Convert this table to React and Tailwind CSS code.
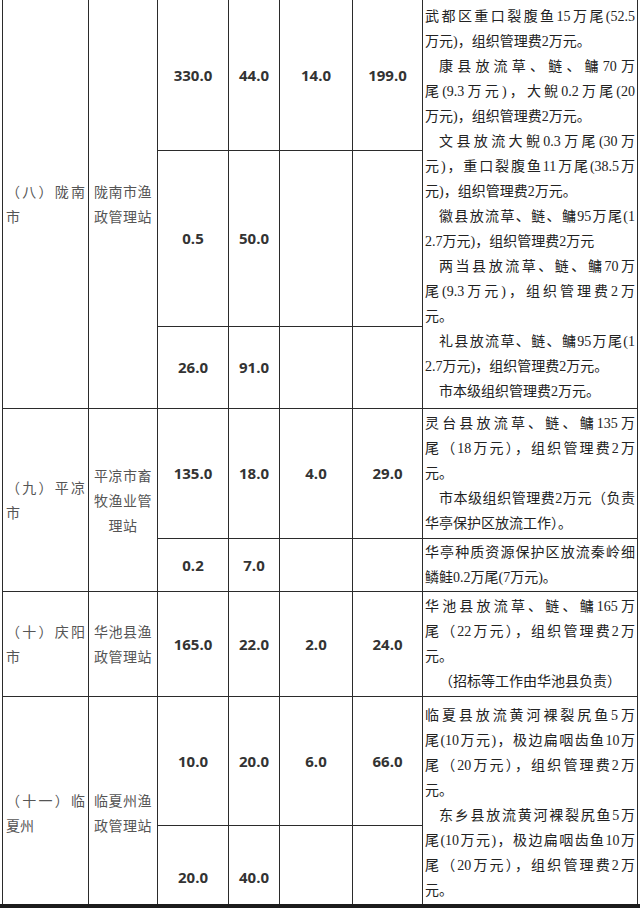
import React from "react"
import clsx from "clsx"

// one visual line of the notes column; j = stretched to full width, i = paragraph indent
const Line = ({ t, j, i }) => (
    <div className={clsx(j ? "text-justify [text-align-last:justify]" : "text-left", i && "indent-[14px]")}>
        {t}
    </div>
)

const Num = ({ pos, v }) => (
    <div className={clsx(pos, "flex items-center justify-center bg-white font-['Open_Sans',sans-serif] text-[15px] font-bold text-[#333]")}>
        {v}
    </div>
)

const Region = ({ pos, text }) => (
    <div className={clsx(pos, "flex items-center bg-white px-[3px] font-['Noto_Sans_CJK_SC',sans-serif] text-[14px] leading-[25px] text-[#555]")}>
        <div className="w-full text-justify">{text}</div>
    </div>
)

const Station = ({ pos, text }) => (
    <div className={clsx(pos, "flex items-center justify-center bg-white px-[4px] text-center font-['Noto_Sans_CJK_SC',sans-serif] text-[14px] leading-[25px] tracking-[0.5px] text-[#555]")}>
        <div>{text}</div>
    </div>
)

const Notes = ({ pos, lines, top }) => (
    <div className={clsx(pos, "flex bg-white px-[2px] font-['Liberation_Serif','Noto_Sans_CJK_SC',serif] text-[14px] leading-[25px] text-[#222]", top ? "items-start pt-[6px]" : "items-center")}>
        <div className="w-full">
            {lines.map((l, k) => <Line key={k} {...l} />)}
        </div>
    </div>
)

const longnan = [
    { t: "武都区重口裂腹鱼15万尾(52.5", j: true },
    { t: "万元)，组织管理费2万元。" },
    { t: "康县放流草、鲢、鳙70万", j: true, i: true },
    { t: "尾(9.3万元)，大鲵0.2万尾(20", j: true },
    { t: "万元)，组织管理费2万元。" },
    { t: "文县放流大鲵0.3万尾(30万", j: true, i: true },
    { t: "元)，重口裂腹鱼11万尾(38.5万", j: true },
    { t: "元)，组织管理费2万元。" },
    { t: "徽县放流草、鲢、鳙95万尾(1", j: true, i: true },
    { t: "2.7万元)，组织管理费2万元" },
    { t: "两当县放流草、鲢、鳙70万", j: true, i: true },
    { t: "尾(9.3万元)，组织管理费2万", j: true },
    { t: "元。" },
    { t: "礼县放流草、鲢、鳙95万尾(1", j: true, i: true },
    { t: "2.7万元)，组织管理费2万元。" },
    { t: "市本级组织管理费2万元。", i: true },
]

const pingliang = [
    { t: "灵台县放流草、鲢、鳙135万", j: true },
    { t: "尾（18万元），组织管理费2万", j: true },
    { t: "元。" },
    { t: "市本级组织管理费2万元（负责", j: true, i: true },
    { t: "华亭保护区放流工作）。" },
]

const huating = [
    { t: "华亭种质资源保护区放流秦岭细", j: true },
    { t: "鳞鲑0.2万尾(7万元)。" },
]

const qingyang = [
    { t: "华池县放流草、鲢、鳙165万", j: true },
    { t: "尾（22万元），组织管理费2万", j: true },
    { t: "元。" },
    { t: "（招标等工作由华池县负责）", i: true },
]

const linxia = [
    { t: "临夏县放流黄河裸裂尻鱼5万", j: true },
    { t: "尾(10万元)，极边扁咽齿鱼10万", j: true },
    { t: "尾（20万元），组织管理费2万", j: true },
    { t: "元。" },
    { t: "东乡县放流黄河裸裂尻鱼5万", j: true, i: true },
    { t: "尾(10万元)，极边扁咽齿鱼10万", j: true },
    { t: "尾（20万元），组织管理费2万", j: true },
    { t: "元。" },
]

const App = () => {
    return (
        <div className="w-[640px] bg-white">
            <div className="h-[904px] overflow-hidden">
                <div className="ml-[2px] grid w-[636px] grid-cols-[85px_68px_70px_50px_72px_69px_214px] grid-rows-[150px_175px_81px_129px_52px_104px_128px_102px] gap-px bg-[#2b2b2b] px-px pb-px">

                    {/* (八) 陇南市 */}
                    <Region pos="col-start-1 row-start-1 row-span-3" text="（八）陇南市" />
                    <Station pos="col-start-2 row-start-1 row-span-3" text="陇南市渔政管理站" />
                    <Num pos="col-start-3 row-start-1" v="330.0" />
                    <Num pos="col-start-4 row-start-1" v="44.0" />
                    <Num pos="col-start-5 row-start-1" v="14.0" />
                    <Num pos="col-start-6 row-start-1" v="199.0" />
                    <Num pos="col-start-3 row-start-2" v="0.5" />
                    <Num pos="col-start-4 row-start-2" v="50.0" />
                    <Num pos="col-start-5 row-start-2" v="" />
                    <Num pos="col-start-6 row-start-2" v="" />
                    <Num pos="col-start-3 row-start-3" v="26.0" />
                    <Num pos="col-start-4 row-start-3" v="91.0" />
                    <Num pos="col-start-5 row-start-3" v="" />
                    <Num pos="col-start-6 row-start-3" v="" />
                    <Notes pos="col-start-7 row-start-1 row-span-3" lines={longnan} />

                    {/* (九) 平凉市 */}
                    <Region pos="col-start-1 row-start-4 row-span-2" text="（九）平凉市" />
                    <Station pos="col-start-2 row-start-4 row-span-2" text="平凉市畜牧渔业管理站" />
                    <Num pos="col-start-3 row-start-4" v="135.0" />
                    <Num pos="col-start-4 row-start-4" v="18.0" />
                    <Num pos="col-start-5 row-start-4" v="4.0" />
                    <Num pos="col-start-6 row-start-4" v="29.0" />
                    <Notes pos="col-start-7 row-start-4" lines={pingliang} />
                    <Num pos="col-start-3 row-start-5" v="0.2" />
                    <Num pos="col-start-4 row-start-5" v="7.0" />
                    <Num pos="col-start-5 row-start-5" v="" />
                    <Num pos="col-start-6 row-start-5" v="" />
                    <Notes pos="col-start-7 row-start-5" lines={huating} />

                    {/* (十) 庆阳市 */}
                    <Region pos="col-start-1 row-start-6" text="（十）庆阳市" />
                    <Station pos="col-start-2 row-start-6" text="华池县渔政管理站" />
                    <Num pos="col-start-3 row-start-6" v="165.0" />
                    <Num pos="col-start-4 row-start-6" v="22.0" />
                    <Num pos="col-start-5 row-start-6" v="2.0" />
                    <Num pos="col-start-6 row-start-6" v="24.0" />
                    <Notes pos="col-start-7 row-start-6" lines={qingyang} />

                    {/* (十一) 临夏州 */}
                    <Region pos="col-start-1 row-start-7 row-span-2" text="（十一）临夏州" />
                    <Station pos="col-start-2 row-start-7 row-span-2" text="临夏州渔政管理站" />
                    <Num pos="col-start-3 row-start-7" v="10.0" />
                    <Num pos="col-start-4 row-start-7" v="20.0" />
                    <Num pos="col-start-5 row-start-7" v="6.0" />
                    <Num pos="col-start-6 row-start-7" v="66.0" />
                    <Num pos="col-start-3 row-start-8" v="20.0" />
                    <Num pos="col-start-4 row-start-8" v="40.0" />
                    <Num pos="col-start-5 row-start-8" v="" />
                    <Num pos="col-start-6 row-start-8" v="" />
                    <Notes pos="col-start-7 row-start-7 row-span-2" lines={linxia} top />
                </div>
            </div>
            <div className="h-[4px] bg-[#1c1c1c]" />
        </div>
    )
}

export default App
